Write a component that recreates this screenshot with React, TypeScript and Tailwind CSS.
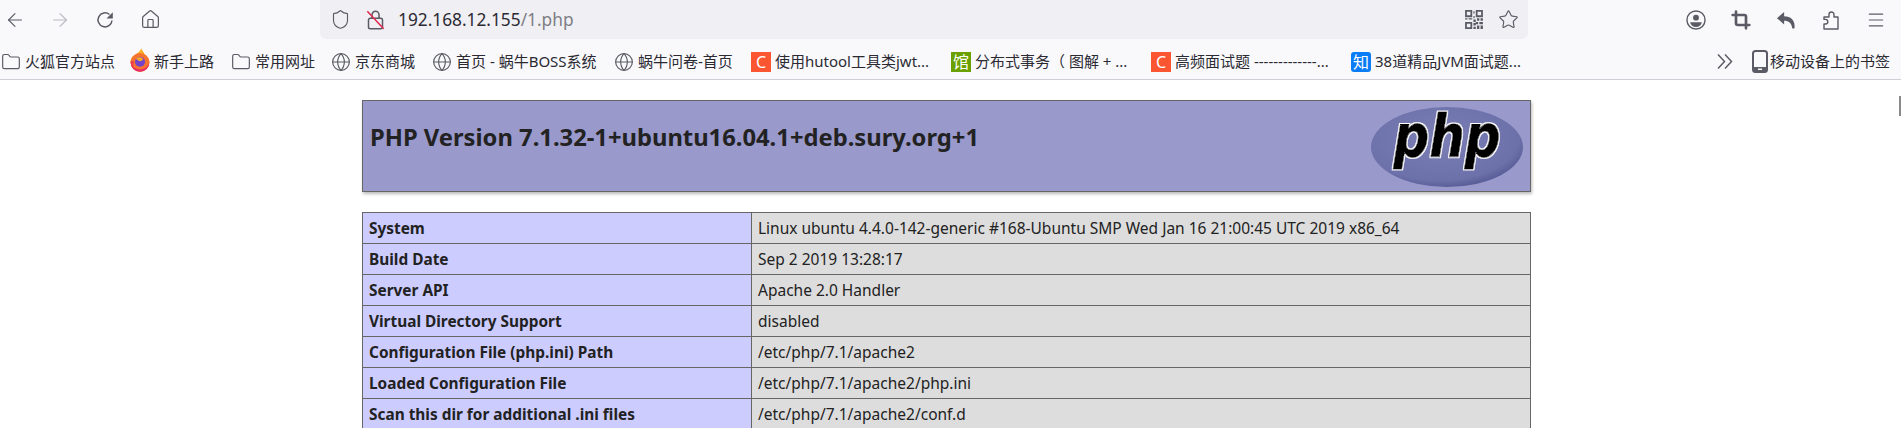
import React from 'react';
import { ArrowLeft, ArrowRight, House, Shield, Star, Crop, Menu, Globe, Folder } from 'lucide-react';

const cjk = "font-['Noto_Sans','Noto_Sans_CJK_SC',sans-serif]";

const rows = [
  ['System', 'Linux ubuntu 4.4.0-142-generic #168-Ubuntu SMP Wed Jan 16 21:00:45 UTC 2019 x86_64'],
  ['Build Date', 'Sep 2 2019 13:28:17'],
  ['Server API', 'Apache 2.0 Handler'],
  ['Virtual Directory Support', 'disabled'],
  ['Configuration File (php.ini) Path', '/etc/php/7.1/apache2'],
  ['Loaded Configuration File', '/etc/php/7.1/apache2/php.ini'],
  ['Scan this dir for additional .ini files', '/etc/php/7.1/apache2/conf.d'],
];

const FirefoxIcon = () => (
  <svg width="20" height="24" viewBox="0 0 17 20" className="mt-[-4px] shrink-0">
    <path d="M9.500 0c.5 2 2.500 3 3 5.500 2 1 4 3.500 4 6.500a8 8 0 0 1-16 0c0-2 .5-4 2-5.500 0 1 .5 1.500 1 2C4 5 8.500 3.500 9.500 0z" fill="#fbb01f" />
    <circle cx="8.500" cy="12" r="8" fill="#f7732e" />
    <path d="M.5 12a8 8 0 0 0 16 0c-1 4-4 6-8 6s-7-2-8-6z" fill="#ea2a6c" />
    <path d="M.5 11c0 3 1.500 5 3 6 -1-2-1-4 0-6z" fill="#f0384f" />
    <circle cx="8.500" cy="11.500" r="4.300" fill="#7542c9" />
    <path d="M5 9c2-2 5-1.500 6 0 .5 1-1 2-3 2z" fill="#f9a825" />
  </svg>
);

const SquareIcon = ({ bg, label, rounded }: { bg: string; label: string; rounded?: boolean }) => (
  <span className={`flex h-[20px] w-[20px] shrink-0 items-center justify-center text-[16px] leading-none text-white ${bg} ${rounded ? 'rounded-[3px]' : ''}`}>
    {label}
  </span>
);

const FolderIcon = () => <Folder size={20} strokeWidth={1.400} className="shrink-0 text-[#5b5b66]" />;
const GlobeIcon = () => <Globe size={20} strokeWidth={1.400} className="shrink-0 text-[#5b5b66]" />;

const bookmarks = [
  { icon: <FolderIcon />, text: '火狐官方站点', w: 'w-[93px]' },
  { icon: <FirefoxIcon />, text: '新手上路', w: 'w-[65px]' },
  { icon: <FolderIcon />, text: '常用网址', w: 'w-[64px]' },
  { icon: <GlobeIcon />, text: '京东商城', w: 'w-[65px]' },
  { icon: <GlobeIcon />, text: '首页 - 蜗牛BOSS系统', w: 'w-[146px]' },
  { icon: <GlobeIcon />, text: '蜗牛问卷-首页', w: 'w-[101px]' },
  { icon: <SquareIcon bg="bg-[#fc5531]" label="C" />, text: '使用hutool工具类jwt...', w: 'w-[164px]' },
  { icon: <SquareIcon bg="bg-[#6aa100]" label="馆" />, text: '分布式事务（ 图解 + ...', w: 'w-[164px]' },
  { icon: <SquareIcon bg="bg-[#fc5531]" label="C" />, text: '高频面试题 -------------...', w: 'w-[164px]' },
  { icon: <SquareIcon bg="bg-[#0a7cf5]" label="知" rounded />, text: '38道精品JVM面试题...', w: 'w-[164px]' },
];

const ReloadIcon = () => (
  <svg width="20" height="20" viewBox="0 0 20 20" fill="none" className="shrink-0">
    <path d="M17 10.500a7 7 0 1 1-2.500-6" stroke="#5b5b66" strokeWidth="1.500" />
    <path d="M17.800 2.200v6.300h-6.300z" fill="#5b5b66" />
  </svg>
);

const LockOff = () => (
  <svg width="19" height="21" viewBox="0 0 16 18" fill="none" className="shrink-0">
    <rect x="2" y="8" width="12" height="9" rx="1.500" stroke="#5b5b66" strokeWidth="1.300" />
    <path d="M5 8V5a3 3 0 0 1 6 0v3" stroke="#5b5b66" strokeWidth="1.300" />
    <path d="M1 2l14 15" stroke="#e22850" strokeWidth="1.300" />
  </svg>
);

const QrIcon = () => (
  <svg width="18" height="19" viewBox="0 0 15 16" fill="#5b5b66" className="shrink-0">
    <path fillRule="evenodd" d="M0 0h6v6H0zM1.500 1.500v3h3v-3zM9 0h6v6H9zM10.500 1.500v3h3v-3zM0 10h6v6H0zM1.500 11.500v3h3v-3z" />
    <path d="M7 1h1v2H7zM7 5h1v2H7zM0 7h2v1H0zM3 7h3v1H3zM7 8h2v2H7zM10 7h2v2h-2zM13 7h2v2h-2zM9 10h2v2H9zM12 10h3v2h-3zM7 11h2v2H7zM10 13h2v3h-2zM13 13h2v3h-2zM7 14h2v2H7z" />
  </svg>
);

const AccountIcon = () => (
  <svg width="20" height="20" viewBox="0 0 17 17" className="shrink-0">
    <circle cx="8.500" cy="8.500" r="7.700" fill="none" stroke="#5b5b66" strokeWidth="1.200" />
    <circle cx="8.500" cy="6.500" r="2.500" fill="#5b5b66" />
    <path d="M3.500 10.500h10c-.5 2.500-2.500 4-5 4s-4.500-1.500-5-4z" fill="#5b5b66" />
  </svg>
);

const ReplyIcon = () => (
  <svg width="20" height="20" viewBox="0 0 16 16" fill="#5b5b66" className="shrink-0">
    <path d="M6.500 1.500 .8 6.500l5.700 5V8.600c3.700 0 5.800 1.800 6.500 5.900.4.300 1.500.3 1.800 0C15.500 9 12.500 5 6.500 5z" />
  </svg>
);

const PuzzleIcon = () => (
  <svg width="20" height="20" viewBox="0 0 20 20" fill="none" className="shrink-0">
    <path
      d="M3 7h5V4.500a2.500 2.500 0 0 1 5 0V7h4v12H3v-5h1.500a2.300 2.300 0 0 0 0-4.600H3z"
      stroke="#5b5b66"
      strokeWidth="1.400"
      strokeLinejoin="round"
    />
  </svg>
);

const ChevronsIcon = () => (
  <svg width="16" height="17" viewBox="0 0 16 17" fill="none" className="ml-[178px] shrink-0">
    <path d="M1 1.500 7.500 8.500 1 15.500M8 1.500l6.500 7-6.500 7" stroke="#5b5b66" strokeWidth="1.500" />
  </svg>
);

const PhoneIcon = () => (
  <svg width="16" height="23" viewBox="0 0 16 23" className="ml-[19px] shrink-0">
    <rect x="1" y="1" width="14" height="21" rx="2.500" fill="none" stroke="#5b5b66" strokeWidth="2" />
    <path d="M1 17h14v3a2 2 0 0 1-2 2H3a2 2 0 0 1-2-2z" fill="#5b5b66" />
    <rect x="6" y="18.500" width="4" height="1.500" fill="#f9f9fb" />
  </svg>
);

const App = () => {
  return (
    <div className="h-[428px] w-[1901px] overflow-hidden bg-white">
      <header className="border-b border-[#cfcfd8] bg-[#f9f9fb]">
        <div className="flex h-[39px] items-center text-[#5b5b66]">
          <div className="flex w-[320px] items-center gap-[25px] pl-[5px]">
            <ArrowLeft size={22} strokeWidth={1.200} className="mx-[-1px]" />
            <ArrowRight size={22} strokeWidth={1.200} className="mx-[-1px] text-[#b9b9c0]" />
            <ReloadIcon />
            <House size={21} strokeWidth={1.400} />
          </div>
          <div className="flex h-[39px] w-[1208px] items-center rounded-b-[6px] bg-[#f0f0f4] pr-[9px] pl-[10px]">
            <Shield size={21} strokeWidth={1.300} className="mr-[15px] shrink-0" />
            <LockOff />
            <span className="ml-[13px] font-['Noto_Sans',sans-serif] text-[17.300px] text-[#2b2a33]">
              192.168.12.155<span className="text-[#7d7d85]">/1.php</span>
            </span>
            <div className="ml-auto flex items-center gap-[15px]">
              <QrIcon />
              <Star size={21} strokeWidth={1.300} />
            </div>
          </div>
          <div className="ml-auto flex items-center gap-[25px] pr-[15px]">
            <AccountIcon />
            <Crop size={20} strokeWidth={3.200} />
            <ReplyIcon />
            <PuzzleIcon />
            <Menu size={20} strokeWidth={1.400} />
          </div>
        </div>
        <div className={`flex h-[40px] items-center pt-[5px] pl-[1px] text-[15px] text-[#2b2a33] ${cjk}`}>
          <div className="flex items-center gap-[12px]">
            {bookmarks.map((b) => (
              <div key={b.text} className="flex items-center gap-[4px]">
                {b.icon}
                <span className={`whitespace-nowrap ${b.w}`}>{b.text}</span>
              </div>
            ))}
          </div>
          <ChevronsIcon />
          <PhoneIcon />
          <span className="ml-[2px] whitespace-nowrap">移动设备上的书签</span>
        </div>
      </header>

      <main className="relative pt-[20px] pl-[362px] font-['Noto_Sans',sans-serif] text-[#222222]">
        <div className="w-[1169px]">
          <div className="flex h-[92px] items-start justify-between border border-[#666666] bg-[#9999cc] pr-[6px] shadow-[1px_2px_3px_#bbbbbb]">
            <h1 className="pt-[20px] pl-[7px] text-[23.750px] leading-[32px] font-bold">
              PHP Version 7.1.32-1+ubuntu16.04.1+deb.sury.org+1
            </h1>
            <svg width="154" height="82" viewBox="0 0 154 82" className="mt-[5px]">
              <defs>
                <radialGradient id="phpOval" cx="45%" cy="40%" r="65%">
                  <stop offset="0%" stopColor="#7b7fb5" />
                  <stop offset="80%" stopColor="#6d71aa" />
                  <stop offset="100%" stopColor="#50548f" />
                </radialGradient>
                <filter id="phpHalo" x="-10%" y="-10%" width="120%" height="120%">
                  <feMorphology in="SourceAlpha" operator="dilate" radius="1" result="grown" />
                  <feFlood floodColor="#ffffff" />
                  <feComposite in2="grown" operator="in" result="halo" />
                  <feMerge>
                    <feMergeNode in="halo" />
                    <feMergeNode in="SourceGraphic" />
                  </feMerge>
                </filter>
              </defs>
              <ellipse cx="77" cy="41" rx="76" ry="40" fill="url(#phpOval)" />
              <g filter="url(#phpHalo)">
                <text
                  transform="translate(77 51) scale(0.86 1)"
                  textAnchor="middle"
                  fontFamily="'DejaVu Sans', sans-serif"
                  fontWeight="700"
                  fontStyle="italic"
                  fontSize="58"
                  fill="#000000"
                  stroke="#000000"
                  strokeWidth="0.800"
                >
                  php
                </text>
              </g>
            </svg>
          </div>
          <table className="mt-[20px] w-full table-fixed border-collapse text-[15.400px]">
            <tbody>
              {rows.map(([k, v]) => (
                <tr key={k} className="h-[31px]">
                  <td className="w-[389px] border border-[#666666] bg-[#ccccff] px-[6px] pt-[2px] align-middle font-bold">{k}</td>
                  <td className="border border-[#666666] bg-[#dddddd] px-[6px] pt-[2px] align-middle text-[15.500px]">{v}</td>
                </tr>
              ))}
            </tbody>
          </table>
        </div>
        <div className="absolute top-[16px] right-0 h-[20px] w-[2px] bg-[#8a8a8a]" />
      </main>
    </div>
  );
};

export default App;
